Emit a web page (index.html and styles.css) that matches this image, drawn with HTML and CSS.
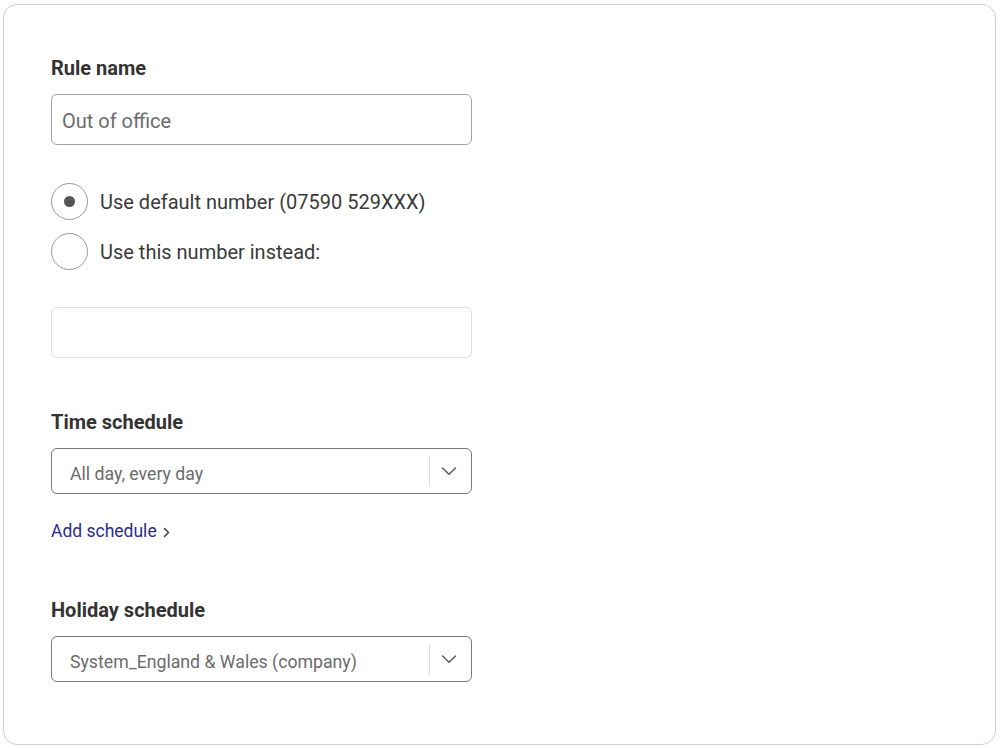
FILE: index.html
```html
<!DOCTYPE html>
<html lang="en">
<head>
<meta charset="utf-8">
<link rel="stylesheet" href="styles.css">
</head>
<body>
<div class="card">
  <div class="field">
    <div class="label">Rule name</div>
    <div class="input input-filled">Out of office</div>
  </div>

  <div class="radios">
    <div class="radio-row">
      <span class="radio radio-checked"><span class="dot"></span></span>
      <span class="radio-text">Use default number (07590 529XXX)</span>
    </div>
    <div class="radio-row">
      <span class="radio"></span>
      <span class="radio-text">Use this number instead:</span>
    </div>
  </div>

  <div class="input input-empty"></div>

  <div class="field field-time">
    <div class="label">Time schedule</div>
    <div class="select">
      <span class="select-value">All day, every day</span>
      <span class="select-sep"></span>
      <span class="select-arrow">
        <svg width="16" height="10" viewBox="0 0 16 10"><path d="M1.5 2 L8 8.3 L14.5 2" fill="none" stroke="#5a5a5a" stroke-width="1.5" stroke-linecap="round" stroke-linejoin="round"/></svg>
      </span>
    </div>
    <a class="link" href="#">Add schedule
      <svg class="chev" width="7" height="11" viewBox="0 0 7 11"><path d="M1.5 1.5 L5.5 5.5 L1.5 9.5" fill="none" stroke="#444" stroke-width="1.6" stroke-linecap="round" stroke-linejoin="round"/></svg>
    </a>
  </div>

  <div class="field field-holiday">
    <div class="label">Holiday schedule</div>
    <div class="select">
      <span class="select-value">System_England &amp; Wales (company)</span>
      <span class="select-sep"></span>
      <span class="select-arrow">
        <svg width="16" height="10" viewBox="0 0 16 10"><path d="M1.5 2 L8 8.3 L14.5 2" fill="none" stroke="#5a5a5a" stroke-width="1.5" stroke-linecap="round" stroke-linejoin="round"/></svg>
      </span>
    </div>
  </div>
</div>
</body>
</html>
```

FILE: styles.css
```css
* { box-sizing: border-box; }
html, body { margin: 0; padding: 0; background: #ffffff; }
body {
  font-family: Roboto, "Liberation Sans", Arial, sans-serif;
  color: #333;
  padding: 4px 6px 3px 3px;
}
.card {
  border: 1px solid #cfcfcf;
  border-radius: 14px;
  height: 741px;
  padding: 51px 47px 0 47px;
}
.label {
  font-size: 20px;
  font-weight: 700;
  line-height: 24px;
  color: #333;
}
.input {
  width: 421px;
  height: 51px;
  border-radius: 6px;
}
.input-filled {
  margin-top: 14px;
  border: 1px solid #a3a3a3;
  background: #fff;
  font-size: 20px;
  color: #6b6b6b;
  line-height: 47px;
  padding-top: 3px;
  padding-left: 10px;
}
.input-empty {
  margin-top: 37px;
  border: 1px solid #dedede;
  background: #fff;
}
.radios {
  margin-top: 38px;
  display: flex;
  flex-direction: column;
  gap: 13px;
}
.radio-row {
  display: flex;
  align-items: center;
  gap: 12px;
}
.radio {
  width: 37px;
  height: 37px;
  border: 1px solid #9a9a9a;
  border-radius: 50%;
  display: flex;
  align-items: center;
  justify-content: center;
  flex: none;
}
.dot {
  width: 11px;
  height: 11px;
  border-radius: 50%;
  background: #555;
}
.radio-text {
  font-size: 20px;
  color: #3a3a3a;
}
.field-time { margin-top: 52px; }
.field-holiday { margin-top: 56px; }
.select {
  margin-top: 14px;
  width: 421px;
  height: 46px;
  border: 1px solid #7a7a7a;
  border-radius: 6px;
  display: flex;
  align-items: center;
}
.select-value {
  flex: 1;
  padding-left: 18px;
  padding-top: 6px;
  font-size: 17.7px;
  color: #6b6b6b;
}
.select-sep {
  width: 1px;
  height: 31px;
  background: #dcdcdc;
}
.select-arrow {
  width: 38px;
  margin-right: 3px;
  display: flex;
  justify-content: center;
  align-items: center;
}
.select-arrow svg { display: block; }
.link {
  display: flex;
  align-items: center;
  gap: 6px;
  width: max-content;
  margin-top: 27px;
  font-size: 17.5px;
  line-height: 21px;
  color: #2b2c8c;
  text-decoration: none;
}
.chev { display: block; margin-top: 2px; }
```
